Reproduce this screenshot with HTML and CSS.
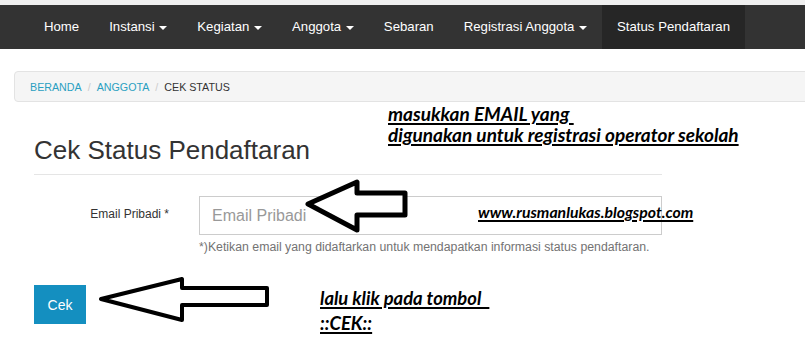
FILE: index.html
```html
<!DOCTYPE html>
<html lang="en">

<head>
    <meta charset="UTF-8">
    <meta name="viewport" content="width=device-width, initial-scale=1.0">
    <title>Cek Status Pendaftaran</title>
    <link rel="stylesheet" href="styles.css">
</head>

<body>
    <div class="topline"></div>
    <nav class="navbar">
        <ul class="nav">
            <li><a href="#">Home</a></li>
            <li><a href="#">Instansi <span class="caret"></span></a></li>
            <li><a href="#">Kegiatan <span class="caret"></span></a></li>
            <li><a href="#">Anggota <span class="caret"></span></a></li>
            <li><a href="#">Sebaran</a></li>
            <li><a href="#">Registrasi Anggota <span class="caret"></span></a></li>
            <li class="active"><a href="#">Status Pendaftaran</a></li>
        </ul>
    </nav>

    <div class="page">
        <ol class="breadcrumb">
            <li><a href="#">Beranda</a></li>
            <li><a href="#">Anggota</a></li>
            <li class="current">Cek Status</li>
        </ol>

        <div class="content">
            <h1 class="title">Cek Status Pendaftaran</h1>
            <form class="form">
                <div class="form-row">
                    <label for="email">Email Pribadi *</label>
                    <div class="field">
                        <input type="text" id="email" placeholder="Email Pribadi">
                        <p class="help">*)Ketikan email yang didaftarkan untuk mendapatkan informasi status pendaftaran.</p>
                    </div>
                </div>
                <button type="button" class="btn">Cek</button>
            </form>
        </div>
    </div>

    <!-- catatan di atas screenshot -->
    <div class="notes">
        <svg class="arrows" width="805" height="349" viewBox="0 0 805 349">
            <polygon points="308,204 357,182 357,193 405,193 405,215 357,215 357,230" fill="#fff" stroke="#000" stroke-width="5" stroke-linejoin="round" />
            <polygon points="101,299 182,279 182,288 267,288 267,305 182,305 182,320" fill="#fff" stroke="#000" stroke-width="4" stroke-linejoin="round" />
        </svg>
        <p class="note note-email">masukkan EMAIL yang&nbsp;<br>digunakan untuk registrasi operator sekolah</p>
        <p class="note note-url">www.rusmanlukas.blogspot.com</p>
        <p class="note note-cek">lalu klik pada tombol &nbsp;<br>::CEK::</p>
    </div>
</body>

</html>
```

FILE: styles.css
```css
html {
    overflow: hidden;
}

body {
    position: relative;
    margin: 0;
    padding: 0;
    min-height: 349px;
    font-family: "Liberation Sans", Arial, sans-serif;
    font-size: 14px;
    color: #333;
    background-color: #fff;
}

.topline {
    height: 5px;
    background-color: #f0f0f0;
}

.navbar {
    background-color: #333;
    height: 44px;
    padding-left: 29px;
}

.nav {
    display: flex;
    margin: 0;
    padding: 0;
    list-style: none;
}

.nav a {
    display: block;
    padding: 0 15px;
    line-height: 44px;
    color: #fff;
    text-decoration: none;
    font-size: 13.2px;
}

.nav .active a {
    background-color: #262626;
}

.caret {
    display: inline-block;
    width: 0;
    height: 0;
    margin-left: 1px;
    vertical-align: middle;
    border-top: 4px solid #fff;
    border-left: 4px solid transparent;
    border-right: 4px solid transparent;
}

.page {
    padding: 22px 0 0 14px;
    width: 830px;
}

.breadcrumb {
    display: flex;
    margin: 0;
    padding: 1px 15px 0;
    height: 28px;
    align-items: center;
    list-style: none;
    background-color: #f5f5f5;
    border: 1px solid #e3e3e3;
    border-radius: 4px;
    font-size: 10.7px;
    text-transform: uppercase;
}

.breadcrumb li + li:before {
    content: "/";
    padding: 0 6px;
    color: #ccc;
}

.breadcrumb a {
    color: #2a9fc1;
    text-decoration: none;
}

.breadcrumb .current {
    color: #333;
}

.content {
    width: 628px;
    padding-left: 20px;
}

.title {
    margin: 33px 0 0;
    padding-bottom: 9px;
    font-size: 26px;
    font-weight: normal;
    line-height: 30px;
    border-bottom: 1px solid #e5e5e5;
}

.form-row {
    display: grid;
    grid-template-columns: 135px 1fr;
    column-gap: 30px;
    margin-top: 21px;
}

.form-row label {
    text-align: right;
    font-size: 12px;
    padding-top: 11px;
}

.field input {
    box-sizing: border-box;
    display: block;
    width: 100%;
    height: 39px;
    padding: 0 12px;
    font-family: "Liberation Sans", Arial, sans-serif;
    font-size: 16px;
    color: #555;
    border: 1px solid #ccc;
    border-radius: 0;
    outline: none;
}

.field input::placeholder {
    color: #999;
}

.help {
    margin: 5px 0 0;
    font-size: 12.3px;
    color: #737373;
}

.btn {
    display: block;
    margin-top: 31px;
    width: 52px;
    height: 39px;
    padding: 0;
    border: none;
    background-color: #148fc0;
    color: #fff;
    font-family: "Liberation Sans", Arial, sans-serif;
    font-size: 14px;
}

button:hover {
    cursor: pointer;
}

/* overlay: panah dan tulisan tambahan */
.notes {
    position: absolute;
    top: 0;
    left: 0;
    width: 805px;
    height: 349px;
    pointer-events: none;
}

.arrows {
    position: absolute;
    top: 0;
    left: 0;
}

.note {
    position: absolute;
    margin: 0;
    font-family: Lato, "Open Sans", sans-serif;
    font-weight: bold;
    font-style: italic;
    color: #000;
    text-decoration: underline;
    text-decoration-thickness: 2px;
    text-underline-offset: 2px;
    white-space: nowrap;
}

.note-email {
    left: 388px;
    top: 103px;
    font-size: 19px;
    line-height: 21px;
}

.note-url {
    left: 478px;
    top: 203px;
    font-size: 15.8px;
    line-height: 18px;
}

.note-cek {
    left: 320px;
    top: 286px;
    font-size: 18.4px;
    line-height: 25px;
}
```
